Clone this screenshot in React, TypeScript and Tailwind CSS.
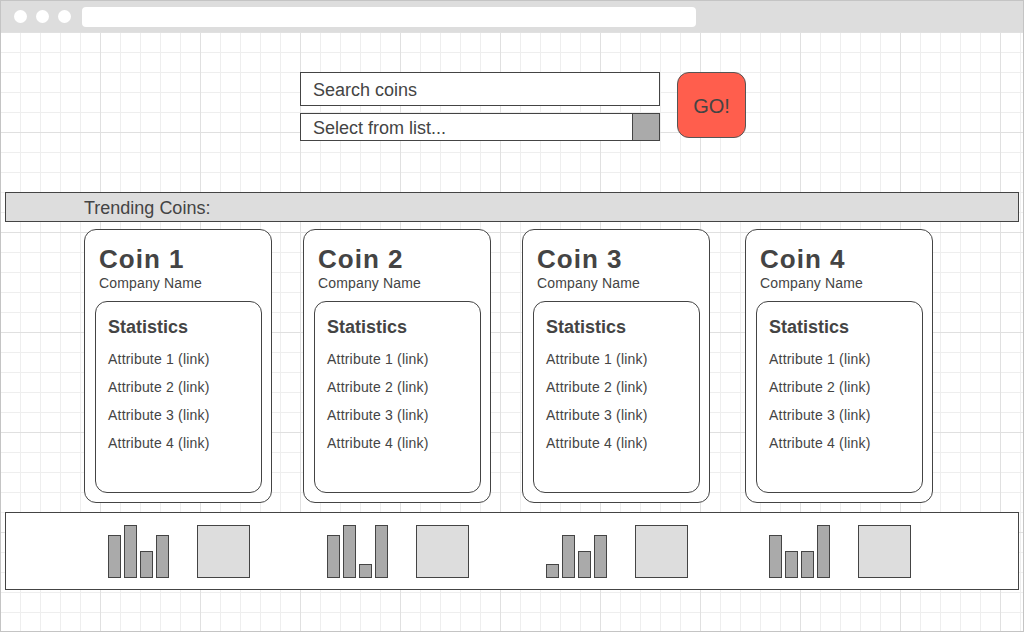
const coins = [
  { name: 'Coin 1', gap: '', bars: [43, 53, 27, 43] },
  { name: 'Coin 2', gap: 'ml-[31px]', bars: [43, 53, 14, 53] },
  { name: 'Coin 3', gap: 'ml-[31px]', bars: [14, 43, 27, 43] },
  { name: 'Coin 4', gap: 'ml-[35px]', bars: [43, 27, 27, 53] },
]

const attributes = ['Attribute 1 (link)', 'Attribute 2 (link)', 'Attribute 3 (link)', 'Attribute 4 (link)']

function CoinCard({ name, gap }: { name: string; gap: string }) {
  return (
    <div className={`${gap} h-[274px] w-[188px] shrink-0 rounded-[12px] border border-[#444] bg-white pt-[14px]`}>
      <div className="pl-[14px] text-[26px] font-bold leading-[30px] tracking-[1px] text-[#444]">{name}</div>
      <div className="pl-[14px] pt-[1px] text-[14px] leading-[16px] tracking-[0.15px] text-[#444]">Company Name</div>
      <div className="ml-[10px] mt-[10px] h-[192px] w-[167px] rounded-[12px] border border-[#444] pl-[12px] pt-[14px]">
        <div className="text-[18px] font-bold leading-[22px] text-[#444]">Statistics</div>
        <ul className="mt-[7px]">
          {attributes.map((a) => (
            <li key={a} className="text-[14px] leading-[28px] tracking-[0.2px] text-[#444]">
              {a}
            </li>
          ))}
        </ul>
      </div>
    </div>
  )
}

function ChartCell({ bars, gap }: { bars: number[]; gap: string }) {
  return (
    <div className={`${gap} flex w-[188px] shrink-0 items-end pl-[24px]`}>
      <div className="flex items-end gap-[3px]">
        {bars.map((h, i) => (
          <div key={i} className="w-[13px] border border-[#444] bg-[#aaa]" style={{ height: h }} />
        ))}
      </div>
      <div className="ml-[28px] h-[53px] w-[53px] border border-[#444] bg-[#ddd]" />
    </div>
  )
}

export default function App() {
  return (
    <div className="h-[633px] w-[1026px] bg-white font-['Liberation_Sans',Arial,sans-serif]">
      <div className="flex h-[632px] w-[1024px] flex-col overflow-hidden border border-[#c4c4c4] bg-white">
        {/* browser chrome */}
        <div className="flex h-[31px] shrink-0 items-center bg-[#dddddd] pl-[13px]">
          <span className="h-[13px] w-[13px] rounded-full bg-white" />
          <span className="ml-[9px] h-[13px] w-[13px] rounded-full bg-white" />
          <span className="ml-[9px] h-[13px] w-[13px] rounded-full bg-white" />
          <span className="ml-[11px] h-[20px] w-[614px] rounded-[4px] bg-white" />
        </div>

        <div className="flex-1 [background-image:linear-gradient(to_right,#e0e0e0_1px,transparent_1px),linear-gradient(to_bottom,#e0e0e0_1px,transparent_1px),linear-gradient(to_right,#eeeeee_1px,transparent_1px),linear-gradient(to_bottom,#eeeeee_1px,transparent_1px)] [background-position:-1px_0] [background-size:100px_100px,100px_100px,20px_20px,20px_20px]">
          {/* search */}
          <div className="mt-[40px] flex items-start pl-[299px]">
            <div className="flex w-[360px] flex-col gap-[7px]">
              <div className="h-[34px] border border-[#444] bg-white pl-[12px] pt-[1px] text-[18px] leading-[32px] text-[#444]">
                Search coins
              </div>
              <div className="flex h-[28px] border border-[#444] bg-white">
                <span className="flex-1 pl-[12px] pt-[1px] text-[18px] leading-[26px] text-[#444]">Select from list...</span>
                <span className="w-[27px] border-l border-[#444] bg-[#aaa]" />
              </div>
            </div>
            <button className="ml-[17px] flex h-[66px] w-[69px] items-center justify-center rounded-[12px] border border-[#555] bg-[#ff5e4d] pt-[2px] text-[20px] leading-[20px] text-[#444]">
              GO!
            </button>
          </div>

          {/* trending */}
          <div className="ml-[4px] mt-[51px] h-[30px] w-[1014px] border border-[#444] bg-[#dddddd] pl-[78px] pt-[1px] text-[18px] leading-[28px] text-[#444]">
            Trending Coins:
          </div>

          <div className="mt-[7px] flex pl-[83px]">
            {coins.map((c) => (
              <CoinCard key={c.name} name={c.name} gap={c.gap} />
            ))}
          </div>

          <div className="ml-[4px] mt-[9px] flex h-[78px] w-[1014px] border border-[#444] bg-white pb-[11px] pl-[78px]">
            {coins.map((c) => (
              <ChartCell key={c.name} bars={c.bars} gap={c.gap} />
            ))}
          </div>
        </div>
      </div>
    </div>
  )
}
